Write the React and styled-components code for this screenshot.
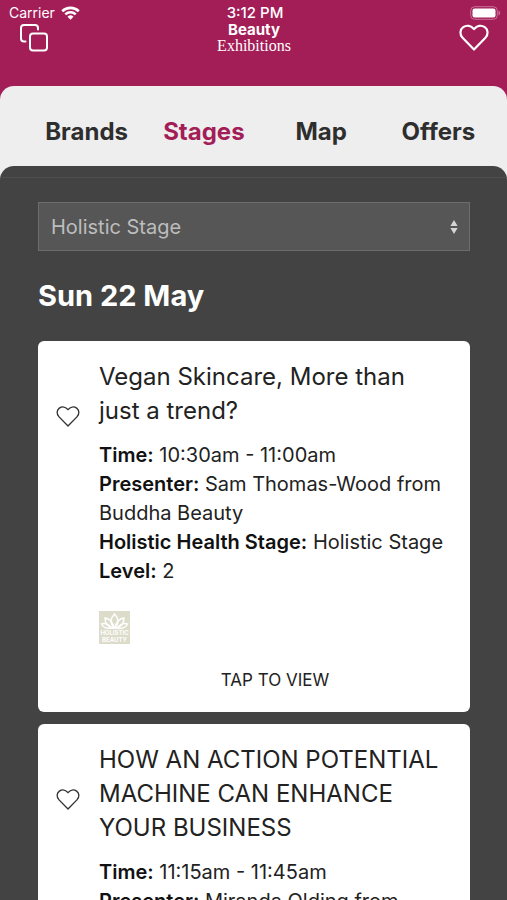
import React, { useState } from "react";
import styled, { createGlobalStyle } from "styled-components";

const GlobalStyle = createGlobalStyle`
  *, *::before, *::after { box-sizing: border-box; }
  body {
    margin: 0;
    background: #434343;
    font-family: Inter, "Liberation Sans", sans-serif;
    color: #222;
  }
  button, select { font: inherit; color: inherit; }
`;

const Screen = styled.div`
  display: flex;
  flex-direction: column;
  height: 100vh;
  overflow: hidden;
  background: #a31d57;
`;

const Header = styled.header`
  flex: none;
  height: 86px;
  color: #fff;
`;

const StatusBar = styled.div`
  display: grid;
  grid-template-columns: 1fr auto 1fr;
  align-items: center;
  height: 22px;
  padding: 4px 6px 0 9px;
  font-size: 14px;
  line-height: 18px;
`;

const Carrier = styled.span`
  display: flex;
  align-items: center;
  gap: 6px;
`;

const Clock = styled.span`
  font-size: 15px;
  font-weight: 500;
`;

const BatteryIcon = styled.svg`
  justify-self: end;
`;

const TitleBar = styled.div`
  display: flex;
  align-items: flex-start;
  justify-content: space-between;
  padding: 0 18px 0 19px;
`;

const IconButton = styled.button`
  display: flex;
  flex: none;
  padding: 0;
  border: 0;
  background: none;
  color: ${(p) => p.$color || "#fff"};
  cursor: pointer;
`;

const Brand = styled.h1`
  display: flex;
  flex-direction: column;
  align-items: center;
  margin: 0;
  font-size: 15px;
  line-height: 16px;
  font-weight: 700;
`;

const BrandSub = styled.span`
  font-family: "Liberation Serif", serif;
  font-size: 16px;
  font-weight: 400;
`;

const Sheet = styled.div`
  display: flex;
  flex: 1;
  flex-direction: column;
  min-height: 0;
  border-radius: 14px 14px 0 0;
  background: #eeeeee;
`;

const Tabs = styled.nav`
  display: grid;
  flex: none;
  grid-template-columns: repeat(4, 1fr);
  height: 80px;
  padding: 10px 10px 0 28px;
`;

const Tab = styled.a`
  display: flex;
  align-items: center;
  justify-content: center;
  color: ${(p) => (p.$active ? "#a31d57" : "#2e2e2e")};
  font-size: 24px;
  font-weight: 700;
  text-decoration: none;
`;

const Panel = styled.main`
  flex: 1;
  min-height: 0;
  padding-top: 11px;
  overflow: hidden;
  border-radius: 14px 14px 0 0;
  background: #434343;
`;

const Scroller = styled.div`
  height: 100%;
  padding: 24px 37px 24px 38px;
  overflow-y: auto;
  border-top: 1px solid #4e4e4e;
  scrollbar-width: none;
`;

const SelectWrap = styled.div`
  display: grid;
  align-items: center;
`;

const StageSelect = styled.select`
  grid-area: 1 / 1;
  width: 100%;
  height: 49px;
  padding: 0 40px 0 12px;
  appearance: none;
  border: 1px solid #6c6c6c;
  border-radius: 0;
  background: #565656;
  color: #bdbdbd;
  font-size: 20px;
`;

const SelectArrows = styled.svg`
  grid-area: 1 / 1;
  justify-self: end;
  margin-right: 12px;
  pointer-events: none;
`;

const DayHeading = styled.h2`
  margin: 27px 0;
  color: #fff;
  font-size: 29px;
  line-height: 36px;
  font-weight: 700;
`;

const SessionList = styled.div`
  display: flex;
  flex-direction: column;
  gap: 12px;
`;

const Card = styled.article`
  display: grid;
  grid-template-columns: 24px 1fr;
  column-gap: 19px;
  padding: 19px 18px 18px;
  border-radius: 6px;
  background: #fff;
`;

const Favourite = styled(IconButton)`
  align-self: start;
  margin-top: 44px;
`;

const SessionTitle = styled.h3`
  margin: 0 0 13px;
  font-size: 24px;
  line-height: 34px;
  font-weight: 400;
`;

const Details = styled.dl`
  margin: 0;
  font-size: 20px;
  line-height: 29px;
`;

const Label = styled.dt`
  display: inline;
  color: #111;
  font-weight: 600;
`;

const Value = styled.dd`
  display: inline;
  margin: 0;
`;

const Logo = styled.svg`
  display: block;
  margin-top: 25px;
`;

const ViewButton = styled.button`
  grid-column: 1 / -1;
  justify-self: center;
  margin-top: 22px;
  padding: 0 0 0 42px;
  border: 0;
  background: none;
  font-size: 17px;
  line-height: 28px;
  cursor: pointer;
`;

function Heart({ size, stroke }) {
  return (
    <svg width={size} height={size} viewBox="0 0 30 30" fill="none" stroke="currentColor" strokeWidth={stroke} strokeLinejoin="round" aria-hidden="true">
      <path d="M15 27.500 3.800 16.100C.4 12.600.8 7.500 4.200 5.100c3.400-2.300 7.800-1.700 10.800 2 3-3.700 7.400-4.300 10.800-2 3.400 2.400 3.800 7.500.4 11Z" />
    </svg>
  );
}

function WifiIcon() {
  return (
    <svg width="19" height="14" viewBox="0 0 19 14" fill="none" stroke="#fff" strokeWidth="2.600" aria-hidden="true">
      <path d="M1.200 5.200a12 12 0 0 1 16.600 0M4.300 8.400a7.500 7.500 0 0 1 10.400 0" />
      <path d="M9.500 13.700 6.500 10.700a4.300 4.300 0 0 1 6 0Z" fill="#fff" stroke="none" />
    </svg>
  );
}

function Battery() {
  return (
    <BatteryIcon width="31" height="14" viewBox="0 0 31 14" aria-hidden="true">
      <rect x=".7" y=".7" width="26.600" height="12.600" rx="4" fill="none" stroke="#c9719a" strokeWidth="1" />
      <rect x="2.500" y="2.500" width="23" height="9" rx="2" fill="#fff" />
      <path d="M28.500 4.500c2.200.8 2.200 4.200 0 5Z" fill="#c9719a" />
    </BatteryIcon>
  );
}

function CopyIcon() {
  return (
    <svg width="30" height="30" viewBox="0 0 30 30" fill="none" stroke="currentColor" strokeWidth="2" strokeLinecap="round" strokeLinejoin="round" aria-hidden="true">
      <path d="M6.500 19.500H5a3 3 0 0 1-3-3V6a3 3 0 0 1 3-3h11a3 3 0 0 1 3 3v1.500" />
      <rect x="11" y="11.500" width="17" height="17" rx="3" />
    </svg>
  );
}

function HolisticLogo() {
  return (
    <Logo width="31" height="33" viewBox="0 0 31 33" role="img" aria-label="Holistic Beauty">
      <rect width="31" height="33" fill="#dddbca" />
      <g fill="none" stroke="#fff" strokeWidth="1.500">
        <path d="M15.500 17c-5-5-4-10 0-14 4 4 5 9 0 14Z" />
        <path d="M15 17C9 17 6 12 6 7c4 0 8 4 9 10ZM16 17c6 0 9-5 9-10-4 0-8 4-9 10Z" />
        <path d="M13 17C8 18 4 16 2.500 13c3-1 7 0 10.500 4ZM18 17c5 1 9-1 10.500-4-3-1-7 0-10.500 4Z" />
      </g>
      <g fill="#fff" fontFamily="Inter, sans-serif" fontWeight="700" textAnchor="middle">
        <text x="15.500" y="24" fontSize="6">HOLISTIC</text>
        <text x="15.500" y="31" fontSize="6">BEAUTY</text>
      </g>
    </Logo>
  );
}

const TABS = ["Brands", "Stages", "Map", "Offers"];

const SESSIONS = [
  {
    title: "Vegan Skincare, More than just a trend?",
    details: [
      ["Time", "10:30am - 11:00am"],
      ["Presenter", "Sam Thomas-Wood from Buddha Beauty"],
      ["Holistic Health Stage", "Holistic Stage"],
      ["Level", "2"],
    ],
  },
  {
    title: "HOW AN ACTION POTENTIAL MACHINE CAN ENHANCE YOUR BUSINESS",
    details: [
      ["Time", "11:15am - 11:45am"],
      ["Presenter", "Miranda Olding from"],
    ],
  },
];

function Session({ title, details }) {
  return (
    <Card>
      <Favourite type="button" $color="#333" aria-label={`Favourite ${title}`}>
        <Heart size={24} stroke={1.7} />
      </Favourite>
      <div>
        <SessionTitle>{title}</SessionTitle>
        <Details>
          {details.map(([label, value]) => (
            <div key={label}>
              <Label>{label}:</Label> <Value>{value}</Value>
            </div>
          ))}
        </Details>
        <HolisticLogo />
      </div>
      <ViewButton type="button">TAP TO VIEW</ViewButton>
    </Card>
  );
}

export default function App() {
  const [stage, setStage] = useState("Holistic Stage");
  return (
    <Screen>
      <GlobalStyle />
      <Header>
        <StatusBar>
          <Carrier>
            Carrier <WifiIcon />
          </Carrier>
          <Clock>3:12 PM</Clock>
          <Battery />
        </StatusBar>
        <TitleBar>
          <IconButton type="button" aria-label="Copy">
            <CopyIcon />
          </IconButton>
          <Brand>
            Beauty
            <BrandSub>Exhibitions</BrandSub>
          </Brand>
          <IconButton type="button" aria-label="Favourites">
            <Heart size={30} stroke={2.2} />
          </IconButton>
        </TitleBar>
      </Header>
      <Sheet>
        <Tabs>
          {TABS.map((name) => (
            <Tab key={name} href={`#${name.toLowerCase()}`} $active={name === "Stages"}>
              {name}
            </Tab>
          ))}
        </Tabs>
        <Panel>
          <Scroller>
            <SelectWrap>
              <StageSelect aria-label="Stage" value={stage} onChange={(e) => setStage(e.target.value)}>
                <option>Holistic Stage</option>
              </StageSelect>
              <SelectArrows width="8" height="14" viewBox="0 0 8 14" fill="#d4d4d4" aria-hidden="true">
                <path d="M4 0 7.600 6H.4ZM4 14 .4 8h7.200Z" />
              </SelectArrows>
            </SelectWrap>
            <DayHeading>Sun 22 May</DayHeading>
            <SessionList>
              {SESSIONS.map((session) => (
                <Session key={session.title} {...session} />
              ))}
            </SessionList>
          </Scroller>
        </Panel>
      </Sheet>
    </Screen>
  );
}
